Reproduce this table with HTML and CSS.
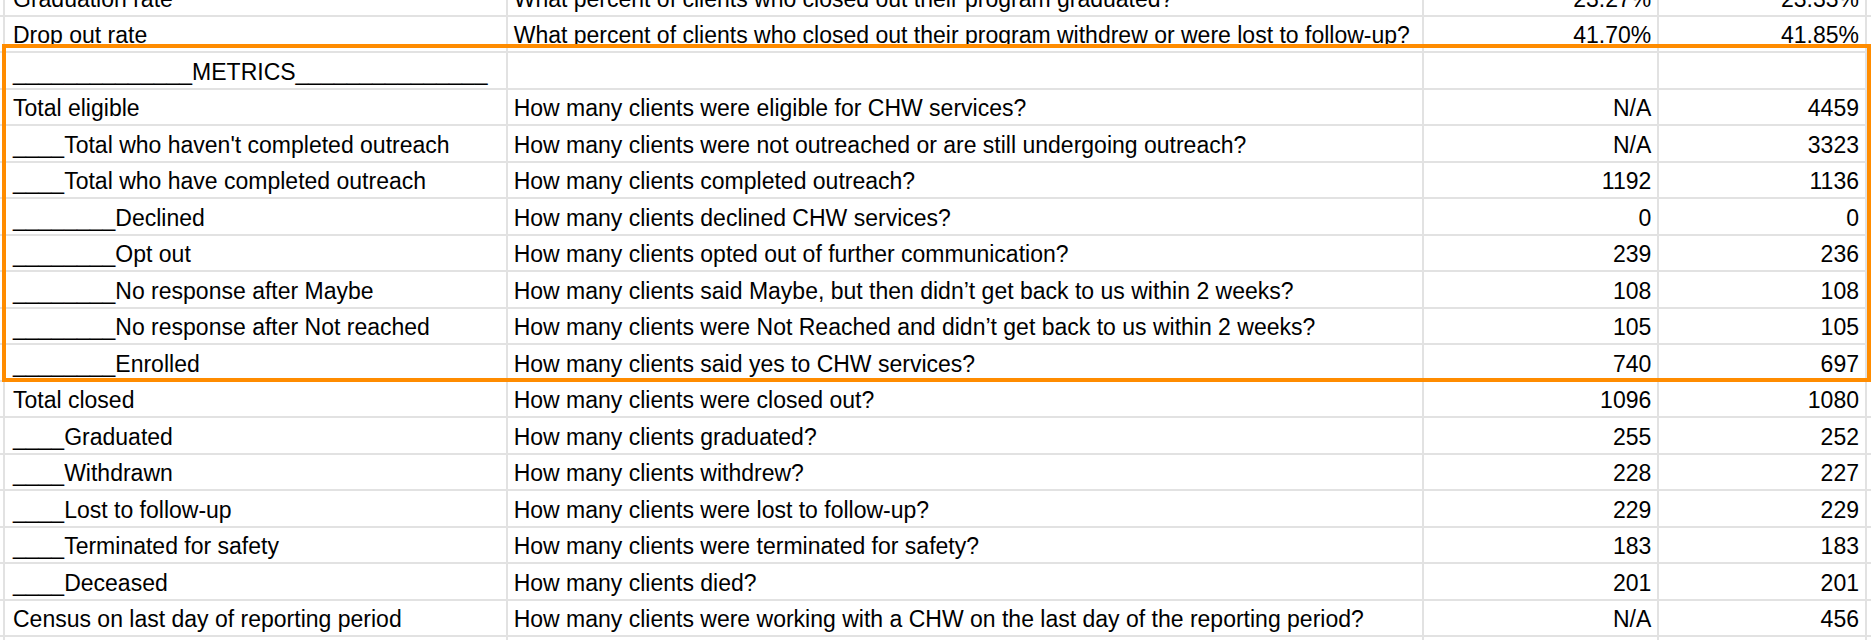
FILE: index.html
```html
<!DOCTYPE html>
<html lang="en">
<head>
<meta charset="utf-8">
<title>Metrics sheet</title>
<link rel="stylesheet" href="styles.css">
</head>
<body>
<div class="sheet">
  <div class="grid">
    <div class="row"><div class="c c0"></div><div class="c c1">Graduation rate</div><div class="c c2">What percent of clients who closed out their program graduated?</div><div class="c num">23.27%</div><div class="c num">23.33%</div><div class="c c5"></div></div>
    <div class="row"><div class="c c0"></div><div class="c c1">Drop out rate</div><div class="c c2">What percent of clients who closed out their program withdrew or were lost to follow-up?</div><div class="c num">41.70%</div><div class="c num">41.85%</div><div class="c c5"></div></div>
    <div class="row"><div class="c c0"></div><div class="c c1">______________METRICS_______________</div><div class="c c2"></div><div class="c num"></div><div class="c num"></div><div class="c c5"></div></div>
    <div class="row"><div class="c c0"></div><div class="c c1">Total eligible</div><div class="c c2">How many clients were eligible for CHW services?</div><div class="c num">N/A</div><div class="c num">4459</div><div class="c c5"></div></div>
    <div class="row"><div class="c c0"></div><div class="c c1">____Total who haven't completed outreach</div><div class="c c2">How many clients were not outreached or are still undergoing outreach?</div><div class="c num">N/A</div><div class="c num">3323</div><div class="c c5"></div></div>
    <div class="row"><div class="c c0"></div><div class="c c1">____Total who have completed outreach</div><div class="c c2">How many clients completed outreach?</div><div class="c num">1192</div><div class="c num">1136</div><div class="c c5"></div></div>
    <div class="row"><div class="c c0"></div><div class="c c1">________Declined</div><div class="c c2">How many clients declined CHW services?</div><div class="c num">0</div><div class="c num">0</div><div class="c c5"></div></div>
    <div class="row"><div class="c c0"></div><div class="c c1">________Opt out</div><div class="c c2">How many clients opted out of further communication?</div><div class="c num">239</div><div class="c num">236</div><div class="c c5"></div></div>
    <div class="row"><div class="c c0"></div><div class="c c1">________No response after Maybe</div><div class="c c2">How many clients said Maybe, but then didn’t get back to us within 2 weeks?</div><div class="c num">108</div><div class="c num">108</div><div class="c c5"></div></div>
    <div class="row"><div class="c c0"></div><div class="c c1">________No response after Not reached</div><div class="c c2">How many clients were Not Reached and didn’t get back to us within 2 weeks?</div><div class="c num">105</div><div class="c num">105</div><div class="c c5"></div></div>
    <div class="row"><div class="c c0"></div><div class="c c1">________Enrolled</div><div class="c c2">How many clients said yes to CHW services?</div><div class="c num">740</div><div class="c num">697</div><div class="c c5"></div></div>
    <div class="row"><div class="c c0"></div><div class="c c1">Total closed</div><div class="c c2">How many clients were closed out?</div><div class="c num">1096</div><div class="c num">1080</div><div class="c c5"></div></div>
    <div class="row"><div class="c c0"></div><div class="c c1">____Graduated</div><div class="c c2">How many clients graduated?</div><div class="c num">255</div><div class="c num">252</div><div class="c c5"></div></div>
    <div class="row"><div class="c c0"></div><div class="c c1">____Withdrawn</div><div class="c c2">How many clients withdrew?</div><div class="c num">228</div><div class="c num">227</div><div class="c c5"></div></div>
    <div class="row"><div class="c c0"></div><div class="c c1">____Lost to follow-up</div><div class="c c2">How many clients were lost to follow-up?</div><div class="c num">229</div><div class="c num">229</div><div class="c c5"></div></div>
    <div class="row"><div class="c c0"></div><div class="c c1">____Terminated for safety</div><div class="c c2">How many clients were terminated for safety?</div><div class="c num">183</div><div class="c num">183</div><div class="c c5"></div></div>
    <div class="row"><div class="c c0"></div><div class="c c1">____Deceased</div><div class="c c2">How many clients died?</div><div class="c num">201</div><div class="c num">201</div><div class="c c5"></div></div>
    <div class="row"><div class="c c0"></div><div class="c c1">Census on last day of reporting period</div><div class="c c2">How many clients were working with a CHW on the last day of the reporting period?</div><div class="c num">N/A</div><div class="c num">456</div><div class="c c5"></div></div>
    <div class="row"><div class="c c0"></div><div class="c c1"></div><div class="c c2"></div><div class="c num"></div><div class="c num"></div><div class="c c5"></div></div>
  </div>
  <div class="highlight"></div>
</div>
</body>
</html>
```

FILE: styles.css
```css
html, body {
  margin: 0;
  padding: 0;
  background: #ffffff;
  overflow: hidden;
}

.sheet {
  position: relative;
  width: 1871px;
  height: 640px;
  overflow: hidden;
  font-family: "Liberation Sans", Arial, sans-serif;
  font-size: 23px;
  color: #000000;
}

.grid {
  margin-top: -19.8px;
}

.row {
  display: grid;
  grid-template-columns: 5px 502.7px 916.3px 235.3px 207.7px 1fr;
  height: 36.5px;
}

.c {
  box-sizing: border-box;
  display: flex;
  align-items: flex-end;
  padding: 0 6px 3px 6px;
  line-height: 26px;
  white-space: nowrap;
  overflow: hidden;
  border-right: 2px solid #e2e2e2;
  border-bottom: 2px solid #e2e2e2;
}

.c0 {
  padding: 0;
}

.c1 {
  padding-left: 8px;
}

.num {
  justify-content: flex-end;
}

.c5 {
  border-right: none;
}

.highlight {
  position: absolute;
  left: 2px;
  top: 44px;
  width: 1869px;
  height: 338px;
  box-sizing: border-box;
  border: 4.5px solid #ff8c00;
  pointer-events: none;
}
```
